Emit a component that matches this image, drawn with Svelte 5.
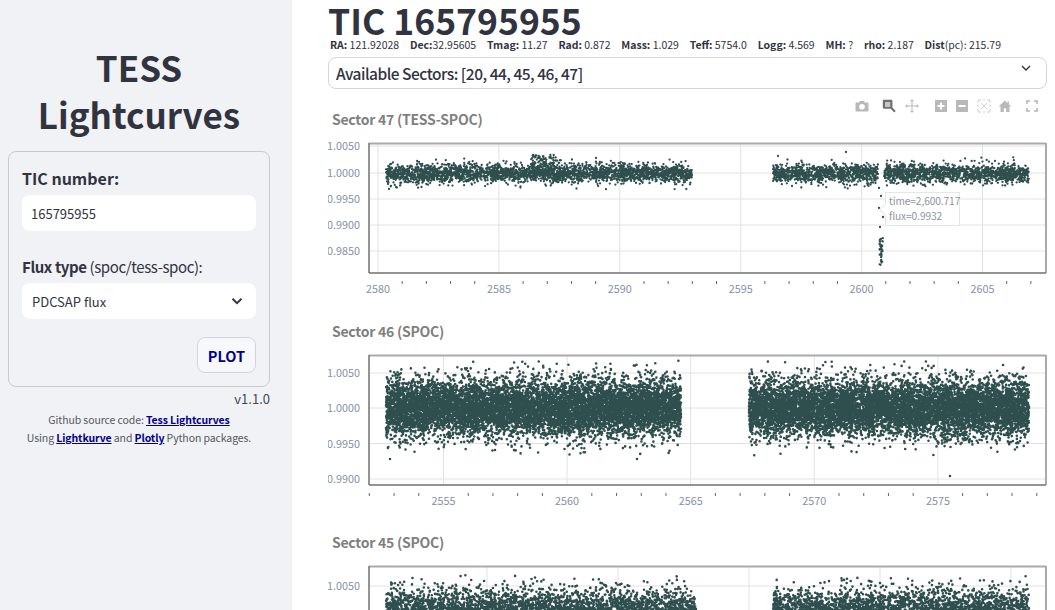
<script>
  // small seeded generator so the scatter looks the same on every load
  function rng(seed) {
    return () => {
      seed = (seed + 0x6d2b79f5) | 0;
      let t = Math.imul(seed ^ (seed >>> 15), 1 | seed);
      t = (t + Math.imul(t ^ (t >>> 7), 61 | t)) ^ t;
      return ((t ^ (t >>> 14)) >>> 0) / 4294967296;
    };
  }

  function scatter(seed, runs, count, cy, sd, lim) {
    const r = rng(seed);
    const gauss = () => Math.sqrt(-2 * Math.log(r() + 1e-9)) * Math.cos(2 * Math.PI * r());
    let d = "";
    const total = runs.reduce((a, s) => a + s[1] - s[0], 0);
    for (const [a, b] of runs) {
      const n = Math.round((count * (b - a)) / total);
      for (let i = 0; i < n; i++) {
        const x = a + r() * (b - a);
        let g = gauss();
        while (Math.abs(g) > lim) g = gauss();
        d += `M${x.toFixed(1)} ${(cy + g * sd).toFixed(1)}h0`;
      }
    }
    return d;
  }

  // dip near the end of sector 47
  function transit() {
    const r = rng(77);
    let d = "M879 188h0M881 196h0M879 208h0M883 217h0M880 227h0M389 189h0M388 184h0M391 186h0";
    for (let i = 0; i < 48; i++) {
      const y = 238 + r() * 27;
      d += `M${(879.5 + r() * 3.5).toFixed(1)} ${y.toFixed(1)}h0`;
    }
    return d;
  }

  function bump() {
    const r = rng(12);
    let d = "M846 152h0M778 156h0";
    for (let i = 0; i < 130; i++) {
      d += `M${(531 + r() * 30).toFixed(1)} ${(155 + r() * 22).toFixed(1)}h0`;
    }
    return d;
  }

  const plots = [
    {
      title: "Sector 47 (TESS-SPOC)",
      frameTop: 143,
      frameBottom: 273,
      x5: 2580, x5px: 378, unit: 24.18, majors: [2580, 2585, 2590, 2595, 2600, 2605],
      ys: [["1.0050", 146], ["1.0000", 173], ["0.9950", 199], ["0.9900", 225], ["0.9850", 251]],
      dots: scatter(47, [[386, 692], [773, 878], [884, 1029]], 5200, 173.5, 4.7, 3.5) + bump() + transit(),
      r: 2.3,
      svgH: 165
    },
    {
      title: "Sector 46 (SPOC)",
      frameTop: 355,
      frameBottom: 485,
      x5: 2555, x5px: 443.5, unit: 24.72, majors: [2555, 2560, 2565, 2570, 2575],
      ys: [["1.0050", 373], ["1.0000", 408], ["0.9950", 443.5], ["0.9900", 479]],
      dots: scatter(46, [[386, 681], [749, 1029]], 18000, 408, 14, 3.4) + "M950 476h0M637 459h0M390 459h0",
      r: 2.6,
      svgH: 164
    },
    {
      title: "Sector 45 (SPOC)",
      frameTop: 566,
      frameBottom: 696,
      x5: 2555, x5px: 487, unit: 26.2, majors: [2555, 2560, 2565, 2570, 2575, 2580],
      ys: [["1.0050", 586], ["1.0000", 621]],
      dots: scatter(45, [[386, 696], [773, 1029]], 15000, 620, 14, 3.2),
      r: 2.6,
      svgH: 165
    }
  ];

  const L = 41, R = 718; // frame edges inside the svg (page x minus 328)

  function minors(p) {
    const out = [];
    for (let i = -20; i < 40; i++) {
      const x = p.x5px + i * p.unit;
      if (i % 5 !== 0 && x >= 369 && x <= 1040) out.push(x - 328);
    }
    return out;
  }

  const stats = [
    ["RA:", " 121.92028"], ["Dec:", "32.95605"], ["Tmag:", " 11.27"], ["Rad:", " 0.872"],
    ["Mass:", " 1.029"], ["Teff:", " 5754.0"], ["Logg:", " 4.569"], ["MH:", " ?"],
    ["rho:", " 2.187"], ["Dist", "(pc): 215.79"]
  ];
</script>

<div class="page">
  <aside class="sidebar">
    <h1 class="brand">TESS<br />Lightcurves</h1>
    <div class="box">
      <label class="lbl" for="tic"><b>TIC number:</b></label>
      <input id="tic" class="field" value="165795955" />
      <label class="lbl second" for="flux"><b>Flux type</b> (spoc/tess-spoc):</label>
      <div id="flux" class="field sel">
        <span>PDCSAP flux</span>
        <svg width="14" height="14" viewBox="0 0 14 14"><path d="M2.500 4.800 7 9.200l4.500-4.400" fill="none" stroke="#31333f" stroke-width="1.900" /></svg>
      </div>
      <div class="actions"><button class="plotbtn" type="button">PLOT</button></div>
    </div>
    <div class="version">v1.1.0</div>
    <p class="foot">Github source code: <a href="#top">Tess Lightcurves</a></p>
    <p class="foot">Using <a href="#top">Lightkurve</a> and <a href="#top">Plotly</a> Python packages.</p>
  </aside>

  <main class="content">
    <h1 class="tic">TIC 165795955</h1>
    <div class="stats">
      {#each stats as s}
        <span><b>{s[0]}</b>{s[1]}</span>
      {/each}
    </div>
    <div class="expander">
      <span>Available Sectors: [20, 44, 45, 46, 47]</span>
      <svg width="12" height="12" viewBox="0 0 12 12"><path d="M2 4l4 4 4-4" fill="none" stroke="#31333f" stroke-width="1.400" /></svg>
    </div>

    <div class="plots">
      <div class="modebar">
        <svg class="mb" style="left:0" viewBox="0 0 14 14"><path fill-rule="evenodd" d="M1.500 3.500h2.600L5 2h4l.9 1.500h2.600c.6 0 1 .4 1 1v7c0 .6-.4 1-1 1h-11c-.6 0-1-.4-1-1v-7c0-.6.4-1 1-1zM7 5a2.800 2.800 0 1 0 0 5.600A2.800 2.800 0 0 0 7 5z" /></svg>
        <svg class="mb on" style="left:27px" viewBox="0 0 14 14"><rect x="2.500" y="2.500" width="6" height="6" fill="#c4c4c4" /><path fill-rule="evenodd" d="M2 .8h7.200c.7 0 1.200.5 1.200 1.200v6.400l3.300 3.500-1.500 1.500-3.400-3.600H2c-.7 0-1.200-.5-1.200-1.200V2C.8 1.300 1.300.8 2 .8zM3 3v5h5.200V3z" /></svg>
        <svg class="mb" style="left:50px" viewBox="0 0 14 14"><path d="M7 0l2 2.300H7.500v4.200h4.200V5L14 7l-2.300 2V7.500H7.500v4.200H9L7 14l-2-2.300h1.500V7.500H2.300V9L0 7l2.300-2v1.500h4.200V2.300H5z" /></svg>
        <svg class="mb" style="left:79px" viewBox="0 0 14 14"><path fill-rule="evenodd" d="M1 1h12v12H1zM6 3.500v2.500H3.500v2H6v2.500h2V8h2.500V6H8V3.500z" /></svg>
        <svg class="mb" style="left:100px" viewBox="0 0 14 14"><path fill-rule="evenodd" d="M1 1h12v12H1zM3.500 6v2h7V6z" /></svg>
        <svg class="mb" style="left:122px" viewBox="0 0 14 14"><path fill="none" stroke="#c4c4c4" stroke-width=".8" d="M1 4V1h3M10 1h3v3M13 10v3h-3M4 13H1v-3M6 1h2M6 13h2M1 6v2M13 6v2M4 4l6 6M10 4l-6 6" /></svg>
        <svg class="mb" style="left:143px" viewBox="0 0 14 14"><path d="M7 1.500.5 7.600h2V13h3.300V9.200h2.400V13h3.300V7.600h2L11 5.700V2.500H9.500v1.700z" /></svg>
        <svg class="mb" style="left:170px" viewBox="0 0 14 14"><path fill="none" stroke="#b4b4b4" stroke-width="1.500" d="M2 5V2h3M9 2h3v3M12 9v3H9M5 12H2V9" /></svg>
      </div>

      {#each plots as p, idx}
        <section class="plot">
          <h3 class="ptitle">{p.title}</h3>
          <svg class="chart" width="727" height={p.svgH} viewBox="0 {p.frameTop - 10} 727 {p.svgH}">
            {#each p.ys as y}
              <line x1={L} x2={R} y1={y[1]} y2={y[1]} class="grid" />
              <text x="32" y={y[1] + 4} class="ylab">{y[0]}</text>
            {/each}
            {#each p.majors as m}
              {@const x = p.x5px + (m - p.x5) * p.unit - 328}
              {#if x > L && x < R}
                <line x1={x} x2={x} y1={p.frameTop} y2={p.frameBottom} class="grid" />
                <text x={x} y={p.frameBottom + 20} class="xlab">{m}</text>
              {/if}
            {/each}
            {#each minors(p) as x}
              <line x1={x} x2={x} y1={p.frameBottom + 8} y2={p.frameBottom + 11} class="minor" />
            {/each}
            <g transform="translate(-328 0)">
              <path d={p.dots} fill="none" stroke="#2f4f4f" stroke-width={p.r} stroke-linecap="round" />
            </g>
            <line x1={L} x2={R} y1={p.frameTop + 0.5} y2={p.frameTop + 0.5} class="top" />
            <line x1={R} x2={R} y1={p.frameTop} y2={p.frameBottom} class="top" />
            <line x1={L} x2={L} y1={p.frameTop} y2={p.frameBottom} class="axis" />
            <line x1={L} x2={R} y1={p.frameBottom} y2={p.frameBottom} class="axis" />
          </svg>
          {#if idx === 0}
            <div class="hover">time=2,600.717<br />flux=0.9932</div>
          {/if}
        </section>
      {/each}
    </div>
  </main>
</div>

<style>
  :global(body) {
    margin: 0;
    overflow: hidden;
    background: #fff;
  }

  .page {
    display: flex;
    width: 1055px;
    height: 610px;
    overflow: hidden;
    color: #31333f;
    font-family: "Noto Sans CJK SC", "Noto Sans", sans-serif;
  }

  .sidebar {
    width: 292px;
    flex: none;
    box-sizing: border-box;
    background: #f0f2f6;
    padding: 43px 22px 0 8px;
  }

  .brand {
    margin: 0 0 14px;
    text-align: center;
    font-size: 35px;
    line-height: 47px;
    font-weight: 700;
  }

  .box {
    border: 1px solid #c8c9ce;
    border-radius: 8px;
    padding: 15px 13px 13px;
    height: 236px;
    box-sizing: border-box;
  }

  .lbl {
    display: block;
    font-size: 16px;
    line-height: 22px;
    margin-bottom: 6px;
  }

  .second {
    margin-top: 25px;
    margin-bottom: 5px;
    font-size: 15px;
    letter-spacing: -0.4px;
  }

  .field {
    display: block;
    box-sizing: border-box;
    width: 234px;
    height: 36px;
    border: 0;
    border-radius: 8px;
    background: #fff;
    padding: 0 9px;
    color: #31333f;
    font: inherit;
    font-size: 13px;
    outline: none;
  }

  .sel {
    display: flex;
    align-items: center;
    justify-content: space-between;
    padding: 0 12px 0 10px;
  }

  .actions {
    display: flex;
    justify-content: flex-end;
    margin-top: 18px;
  }

  .plotbtn {
    width: 59px;
    height: 36px;
    border: 1px solid #d3d4d9;
    border-radius: 8px;
    background: #f7f8fb;
    color: #00008b;
    font: inherit;
    font-size: 14.500px;
    font-weight: 700;
    padding: 0;
  }

  .version {
    text-align: right;
    font-size: 13px;
    line-height: 20px;
    color: #44464f;
    margin: 2px 0 2px;
  }

  .foot {
    margin: 0;
    text-align: center;
    font-size: 10.500px;
    letter-spacing: -0.1px;
    line-height: 18px;
    color: #55575f;
  }

  .foot a {
    color: #00008b;
    font-weight: 700;
  }

  .content {
    flex: 1;
    min-width: 0;
    padding: 0 8px 0 36px;
  }

  .tic {
    margin: 0;
    padding-top: 2px;
    font-size: 35.500px;
    line-height: 36px;
    font-weight: 700;
  }

  .stats {
    display: flex;
    gap: 10.800px;
    padding-left: 2px;
    font-size: 10.500px;
    line-height: 14px;
    white-space: pre;
  }

  .expander {
    display: flex;
    justify-content: space-between;
    align-items: flex-start;
    box-sizing: border-box;
    width: 719px;
    height: 32px;
    margin-top: 5px;
    padding: 4px 14px 0 7px;
    border: 1px solid #d6d6d9;
    border-radius: 8px;
    font-size: 15.500px;
    font-weight: 500;
    letter-spacing: -0.5px;
    line-height: 22px;
  }

  .plots {
    position: relative;
    padding-top: 19px;
  }

  .modebar {
    position: absolute;
    left: 527px;
    top: 10px;
    width: 190px;
    height: 14px;
  }

  .mb {
    position: absolute;
    top: 0;
    width: 14px;
    height: 14px;
    fill: #b9b9b9;
  }

  .mb.on {
    fill: #6e6e6e;
  }

  .plot {
    position: relative;
  }

  .ptitle {
    margin: 0;
    padding-left: 4px;
    height: 25px;
    font-size: 14px;
    letter-spacing: -0.25px;
    line-height: 22px;
    font-weight: 700;
    color: #808080;
  }

  .chart {
    display: block;
    margin-bottom: 22px;
  }

  .grid {
    stroke: #e2e2e2;
    stroke-width: 1;
  }

  .minor {
    stroke: #666;
    stroke-width: 1;
  }

  .top {
    stroke: #aaa;
    stroke-width: 2;
  }

  .axis {
    stroke: #707070;
    stroke-width: 1.500;
  }

  .ylab,
  .xlab {
    font-size: 10.800px;
    fill: #8390ab;
  }

  .ylab {
    text-anchor: end;
  }

  .xlab {
    text-anchor: middle;
  }

  .hover {
    position: absolute;
    left: 557px;
    top: 84px;
    width: 70px;
    height: 31px;
    padding: 1px 0 0 3px;
    border: 1px solid #e6e6e6;
    background: rgba(255, 255, 255, 0.85);
    font-size: 10.200px;
    letter-spacing: -0.1px;
    line-height: 14.500px;
    color: #8f93a3;
    white-space: nowrap;
  }

  .hover::before {
    content: "";
    position: absolute;
    left: -5px;
    top: 12px;
    width: 8px;
    height: 8px;
    background: #fff;
    border-left: 1px solid #e6e6e6;
    border-bottom: 1px solid #e6e6e6;
    transform: rotate(45deg);
  }
</style>
